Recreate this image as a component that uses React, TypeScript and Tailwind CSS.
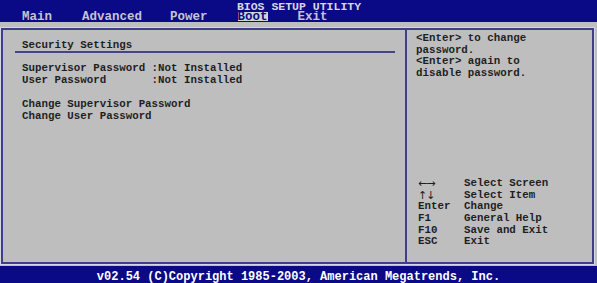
import React from 'react';

const tabs = [
  { label: 'Main', ml: 'ml-[22px]' },
  { label: 'Advanced', ml: 'ml-[30px]' },
  { label: 'Power', ml: 'ml-[28px]' },
  { label: 'Boot', ml: 'ml-[30px]', active: true },
  { label: 'Exit', ml: 'ml-[30px]' },
];

const keys = [
  ['←→', 'Select Screen'],
  ['↑↓', 'Select Item'],
  ['Enter', 'Change'],
  ['F1', 'General Help'],
  ['F10', 'Save and Exit'],
  ['ESC', 'Exit'],
];

const App = () => {
  return (
    <div className="w-[597px] h-[283px] overflow-hidden bg-[#bebebe] font-['Liberation_Mono','DejaVu_Sans_Mono',monospace] font-bold text-[#1e1e1e]">
      {/* Title bar + menu tabs */}
      <div className="h-[22px] bg-[#0a0a86] flex flex-col">
        <div className="h-[12px] pt-[2px] leading-[10px] text-[11.5px] text-center text-[#d6d6e4] pl-[1px]">
          BIOS SETUP UTILITY
        </div>
        <div className="flex h-[10px] text-[12.5px] leading-[10px] text-[#c4c4d4]">
          {tabs.map(t => (
            <span
              key={t.label}
              className={`${t.ml} block h-[8.5px] ${t.active ? 'bg-[#d4d4d8] text-[#0a0a86]' : ''}`}
            >
              {t.label}
            </span>
          ))}
        </div>
      </div>

      {/* Main frame */}
      <div className="ml-[1px] mt-[6px] w-[593px] h-[236px] border-2 border-[#3e3e8a] shadow-[0_0_0_1px_#d6d6e2] flex">
        <div className="w-[402px] pt-[9px] pl-[12px] text-[10.8px] leading-[12px]">
          <div className="pl-[7px]">Security Settings</div>
          <div className="w-[380px] h-[2px] bg-[#44448c]" />
          <div className="mt-[9px] pl-[7px] whitespace-pre">
            <div>Supervisor Password :Not Installed</div>
            <div>User Password       :Not Installed</div>
            <div className="h-[12px]" />
            <div>Change Supervisor Password</div>
            <div>Change User Password</div>
          </div>
        </div>

        <div className="flex-1 border-l-2 border-[#3e3e8a] flex flex-col pt-[3px] pl-[9px] pb-[14px] text-[10.8px] leading-[11.7px]">
          <div>
            <div>&lt;Enter&gt; to change</div>
            <div>password.</div>
            <div>&lt;Enter&gt; again to</div>
            <div>disable password.</div>
          </div>
          <div className="mt-auto">
            {keys.map(([k, d], i) => (
              <div key={d} className="flex h-[11.7px]">
                <span
                  className={`w-[48px] pl-[2px] whitespace-pre ${
                    i < 2 ? "font-normal text-[11px] leading-[11.7px] font-['DejaVu_Sans',sans-serif] tracking-[-1px]" : ''
                  }`}
                >
                  {k}
                </span>
                <span>{d}</span>
              </div>
            ))}
          </div>
        </div>
      </div>

      {/* Footer */}
      <div className="mt-[2px] h-[17px] bg-[#0a0a86] pt-[5px] text-center text-[12px] leading-[12px] text-white">
        v02.54 (C)Copyright 1985-2003, American Megatrends, Inc.
      </div>
    </div>
  );
};

export default App;
